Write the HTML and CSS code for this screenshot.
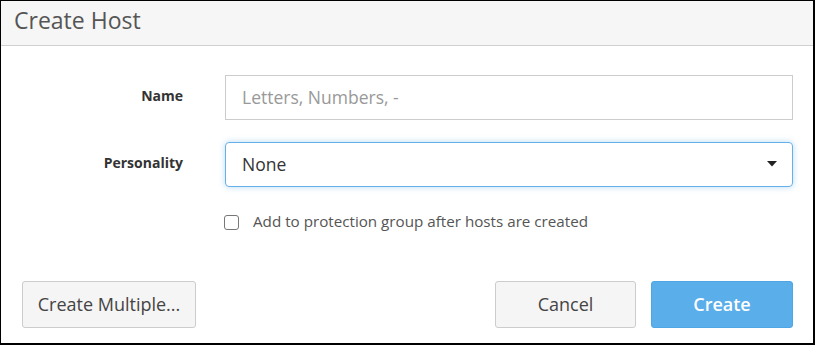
FILE: index.html
```html
<!DOCTYPE html>
<html>
<head>
<meta charset="utf-8">
<link rel="stylesheet" href="styles.css">
</head>
<body>
<div class="dialog">
  <div class="header"><h1 class="title">Create Host</h1></div>
  <div class="body">
    <div class="form">
      <label class="label">Name</label>
      <div class="input placeholder">Letters, Numbers, -</div>
      <label class="label">Personality</label>
      <div class="select">
        <span>None</span>
        <svg class="caret" width="10" height="6" viewBox="0 0 10 6"><path d="M0 0 H10 L5 5.5 Z" fill="#222"/></svg>
      </div>
      <div></div>
      <div class="check-row">
        <span class="checkbox"></span>
        <span class="check-label">Add to protection group after hosts are created</span>
      </div>
    </div>
  </div>
  <div class="footer">
    <button class="btn btn-multi">Create Multiple...</button>
    <div class="spacer"></div>
    <button class="btn btn-cancel">Cancel</button>
    <button class="btn btn-primary">Create</button>
  </div>
</div>
</body>
</html>
```
FILE: styles.css
```css
html, body {
  margin: 0;
  padding: 0;
  background: #fff;
}
body {
  font-family: "Open Sans", "Liberation Sans", sans-serif;
}
.dialog {
  box-sizing: border-box;
  width: 815px;
  height: 345px;
  border: 1px solid #000;
  border-right-width: 2px;
  border-bottom-width: 2px;
  display: flex;
  flex-direction: column;
}
.header {
  height: 44px;
  background: #f6f6f6;
  border-bottom: 1px solid #cfcfcf;
  display: flex;
  align-items: center;
  padding-left: 13px;
}
.title {
  margin: 0 0 6px;
  font-size: 23px;
  font-weight: 400;
  color: #555;
}
.body {
  padding-top: 29px;
}
.form {
  display: grid;
  grid-template-columns: 182px 568px;
  column-gap: 42px;
  row-gap: 22px;
  align-items: center;
}
.label {
  text-align: right;
  font-size: 14px;
  font-weight: 700;
  color: #333;
  padding-bottom: 4px;
}
.input, .select {
  box-sizing: border-box;
  height: 45px;
  border: 1px solid #ccc;
  display: flex;
  align-items: center;
  padding-left: 16px;
  padding-bottom: 1px;
  font-size: 17.5px;
}
.placeholder {
  color: #999;
}
.select {
  border: 1px solid #66afe9;
  border-radius: 4px;
  box-shadow: 0 0 6px rgba(102, 175, 233, 0.45);
  color: #333;
  justify-content: space-between;
  padding-right: 15px;
}
.caret {
  display: block;
}
.check-row {
  display: flex;
  align-items: center;
  margin-top: 2px;
}
.checkbox {
  box-sizing: border-box;
  width: 15px;
  height: 15px;
  border: 1px solid #777;
  border-radius: 3px;
  margin-left: -1px;
  margin-right: 14px;
}
.check-label {
  font-size: 15.2px;
  color: #555;
  padding-bottom: 2px;
}
.footer {
  margin-top: auto;
  padding: 0 20px 15px 21px;
  display: flex;
  gap: 15px;
}
.spacer {
  flex: 1;
}
.btn {
  box-sizing: border-box;
  height: 47px;
  border-radius: 3px;
  font-family: inherit;
  font-size: 18px;
  padding-bottom: 3px;
  cursor: pointer;
}
.btn-multi, .btn-cancel {
  background: #f5f5f5;
  border: 1px solid #ccc;
  color: #444;
}
.btn-multi {
  width: 174px;
}
.btn-cancel {
  width: 141px;
}
.btn-primary {
  width: 142px;
  background: #5aaeea;
  border: 1px solid #4fa6e4;
  color: #fff;
  font-weight: 600;
}
```
